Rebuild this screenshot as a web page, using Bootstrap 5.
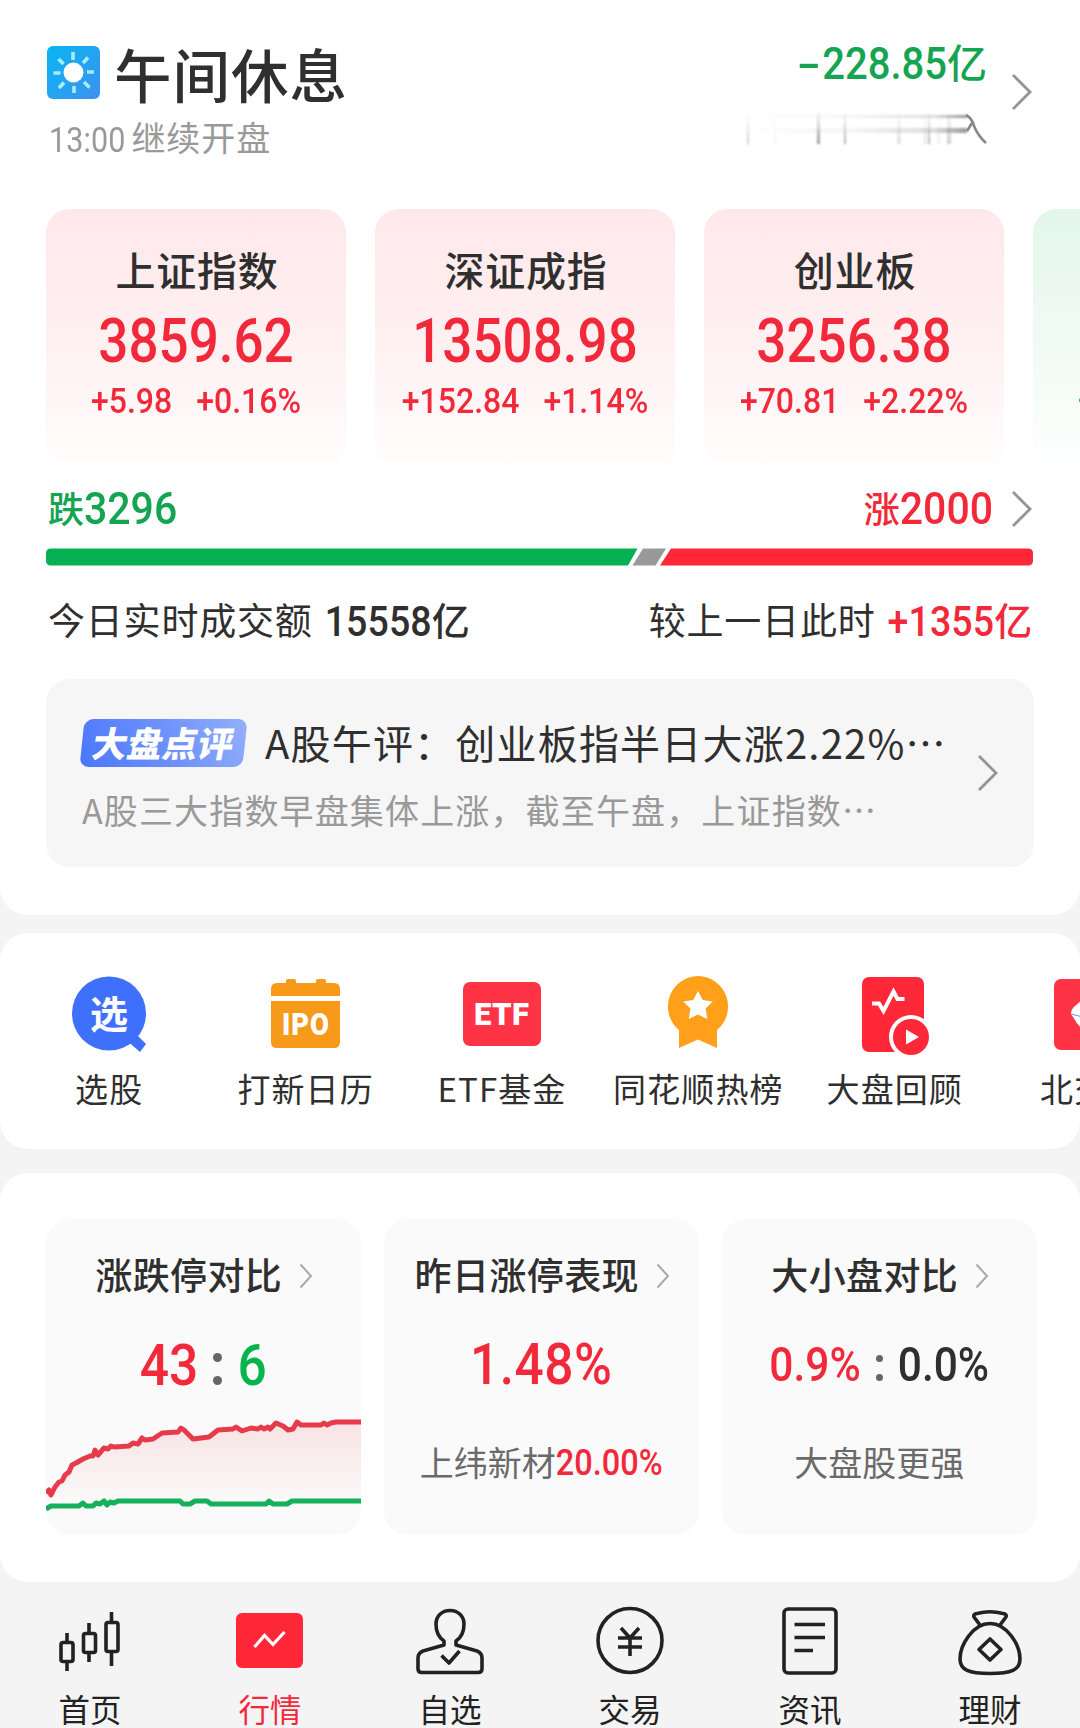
<!DOCTYPE html>
<html lang="zh-CN">
<head>
<meta charset="utf-8">
<meta name="viewport" content="width=device-width, initial-scale=1">
<title>行情</title>
<link rel="stylesheet" href="https://cdn.jsdelivr.net/npm/bootstrap@5.3.0/dist/css/bootstrap.min.css">
<style>
  body{background:#f4f4f4;color:#2f2f2f;font-family:"Noto Sans CJK SC","Noto Sans",sans-serif;width:1080px;height:1728px;overflow:hidden;line-height:1}
  svg{display:block;flex:none}
  .panel{background:#fff;border-radius:28px;overflow:hidden}
  .panel-market{height:915px;border-top-left-radius:0;border-top-right-radius:0;padding:0 46px}
  .panel-tools{height:216px;margin-top:18px}
  .panel-stats{height:409px;margin-top:24px;padding:46px 0 0 46px}
  .up{color:#f2293b}
  .down{color:#14a452}
  .muted{color:#999}
  .med{font-weight:500}
  .din{font-family:Roboto,"Noto Sans",sans-serif;font-weight:500;display:inline-block;transform:scaleY(1.12);white-space:nowrap}
  .head{height:209px}
  .head-title{font-size:57.5px;line-height:60px;letter-spacing:1px;margin:1px 0 0 14px}
  .head-sub{font-size:34px;line-height:40px;letter-spacing:.9px;margin-top:13px;padding-left:3px}
  .head-sub .din{font-size:30.5px;font-weight:400;letter-spacing:.1px;margin-right:6px}
  .flow-sum{font-size:40px;line-height:44px}
  .flow-sum .din{font-size:40px;transform:translateY(-1px) scaleY(1.12)}
  .dash{display:inline-block;transform:scaleX(1.75);margin-right:7px}
  .idx-row{height:259px;gap:29px;width:1400px}
  .idx{width:300px;height:259px;border-radius:24px;flex:none;background:linear-gradient(#fee8ea,#fff0f1 50%,#fffdfd);padding-top:40px}
  .idx-green{background:linear-gradient(#e3f6eb,#f0faf4 50%,#fefffe)}
  .idx-name{font-size:40px;line-height:40px;letter-spacing:.8px;padding-left:2px}
  .idx-val{font-size:53px;line-height:50px;margin-top:22px}
  .idx-val .din{transform:scaleY(1.15)}
  .idx-chg{font-size:32px;line-height:34px;margin-top:18px;gap:24px}
  .breadth{height:80px;font-size:36px;padding:2px 0 0 2px}
  .breadth .din{font-size:41px;transform:scaleY(1.1)}
  .turnover{font-size:37px;line-height:40px;letter-spacing:.8px;margin-top:33px;padding:0 1px 0 2px}
  .turnover .med{margin-left:3px;font-size:38px}
  .turnover .din{font-size:37.5px;letter-spacing:.1px;transform:translateY(-1px) scaleY(1.12)}
  .review{background:#f6f6f6;border-radius:24px;height:188px;margin-top:37px;padding:40px 36px 0 36px}
  .tag{width:163px;height:48px;flex:none;transform:skewX(-6deg);border-radius:9px;background:linear-gradient(60deg,#4b76fb,#6f93fb 55%,#93b0fb);color:#fff;font-weight:900;font-size:35px;line-height:46px}
  .tag span{display:inline-block;transform:skewX(-5deg);letter-spacing:.3px}
  .rv-title{font-size:40px;line-height:46px;letter-spacing:1.2px;margin-left:20px;white-space:nowrap}
  .rv-desc{font-size:34px;line-height:40px;letter-spacing:1.15px;margin-top:23px;white-space:nowrap}
  .tool-row{width:1180px;padding-left:11px}
  .tool{width:196.4px;flex:none;font-size:33px;letter-spacing:1.1px;padding-top:36px}
  .tool-label{margin-top:9px;line-height:40px}
  .stat-row{gap:23.5px;height:316px}
  .stat{width:314.5px;height:316px;flex:none;background:#fafafa;border-radius:24px;overflow:hidden;padding-top:35px}
  .stat-title{font-size:37px;line-height:40px;gap:17px;letter-spacing:.4px;padding-left:2px}
  .stat-title svg{position:relative;top:2px}
  .stat-val{height:60px;margin-top:42px}
  .big-num{font-size:51.5px}
  .mid-num{font-size:42.5px}
  .mid-num,.one-num{position:relative;top:-1px}
  .stat-chart{margin-top:3px}
  .stat-note{font-size:34px;line-height:40px;margin-top:46px;color:#6a6a6a}
  .stat-note .din{font-size:32.5px;transform:translateY(-2px) scaleY(1.12)}
  .colon{display:flex;flex-direction:column}
  .colon i{background:#666;border-radius:50%}
  .tabs{height:146px;padding-top:24px}
  .tab{width:180px;font-size:31.5px;line-height:36px;color:#222}
  .tab svg{margin-bottom:14px}
  .tab.active{color:#f2293b}
</style>
</head>
<body>
<main>
  <section class="panel panel-market">
    <header class="head d-flex justify-content-between">
      <div style="padding-top:42px">
        <div class="d-flex">
          <svg width="54" height="62" viewBox="0 0 54 62">
            <defs><linearGradient id="sky" x1="0" y1="0" x2="1" y2="1"><stop offset="0" stop-color="#07b6f3"/><stop offset="1" stop-color="#3e91f0"/></linearGradient></defs>
            <rect x="1" y="4" width="53" height="53" rx="6" fill="url(#sky)"/>
            <circle cx="27.500" cy="30.500" r="10" fill="#fff"/>
            <g stroke="#a5edff" stroke-width="3.600"><path d="M27 10v8M28 44v7M7.500 31h7M41 30h7M12.500 17l5 5M38 40l5.500 5.500M42 15.500l-5 5.500M18 40.500l-5 5.500"/></g>
          </svg>
          <div class="head-title med">午间休息</div>
        </div>
        <div class="head-sub muted"><span class="din">13:00</span>继续开盘</div>
      </div>
      <div class="d-flex">
        <div class="text-end" style="padding-top:39px">
          <div class="flow-sum down med"><span class="din"><span class="dash">-</span>228.85</span>亿</div>
          <svg class="ms-auto" style="margin-top:21px" width="244" height="38" viewBox="0 0 244 38">
            <defs>
              <linearGradient id="fadeX"><stop offset="0" stop-color="#777" stop-opacity="0"/><stop offset=".5" stop-color="#777" stop-opacity=".08"/><stop offset=".85" stop-color="#777" stop-opacity=".25"/><stop offset="1" stop-color="#666" stop-opacity=".7"/></linearGradient>
              <linearGradient id="fadeY" x1="0" y1="0" x2="0" y2="1"><stop offset="0" stop-color="#888" stop-opacity="0"/><stop offset="1" stop-color="#777" stop-opacity=".75"/></linearGradient>
              <filter id="soft" x="-5%" y="-20%" width="110%" height="140%"><feGaussianBlur stdDeviation=".8"/></filter>
            </defs>
            <g filter="url(#soft)">
              <rect x="4" y="7" width="220" height="3" fill="url(#fadeX)"/>
              <rect x="4" y="20" width="220" height="5" fill="url(#fadeX)"/>
              <g fill="url(#fadeY)"><rect x="4" y="5" width="2" height="31" opacity=".5"/><rect x="31" y="5" width="2" height="31" opacity=".12"/><rect x="74" y="3" width="3" height="33"/><rect x="101" y="3" width="2" height="33" opacity=".8"/><rect x="154" y="3" width="4" height="33" opacity=".3"/><rect x="181" y="3" width="2" height="33" opacity=".3"/><rect x="185" y="3" width="2" height="33" opacity=".8"/><rect x="195" y="5" width="2" height="31" opacity=".2"/><rect x="204" y="3" width="4" height="33" opacity=".5"/></g>
            </g>
            <path d="M223 7q6 3 8 11q4 10 12 17M224 23l5-8" fill="none" stroke="#888" stroke-width="2.600"/>
          </svg>
        </div>
        <svg style="margin:73px 0 0 23px" width="24" height="38" viewBox="0 0 24 38"><path d="M3 2l17 17L3 36" fill="none" stroke="#949494" stroke-width="2.800"/></svg>
      </div>
    </header>

    <div class="idx-row d-flex">
      <div class="idx text-center">
        <div class="idx-name med">上证指数</div>
        <div class="idx-val up"><span class="din">3859.62</span></div>
        <div class="idx-chg up d-flex justify-content-center"><span class="din">+5.98</span><span class="din">+0.16%</span></div>
      </div>
      <div class="idx text-center">
        <div class="idx-name med">深证成指</div>
        <div class="idx-val up"><span class="din">13508.98</span></div>
        <div class="idx-chg up d-flex justify-content-center"><span class="din">+152.84</span><span class="din">+1.14%</span></div>
      </div>
      <div class="idx text-center">
        <div class="idx-name med">创业板</div>
        <div class="idx-val up"><span class="din">3256.38</span></div>
        <div class="idx-chg up d-flex justify-content-center"><span class="din">+70.81</span><span class="din">+2.22%</span></div>
      </div>
      <div class="idx idx-green">
        <div class="down" style="padding:131px 0 0 45px;font-size:32px"><span class="din">-</span></div>
      </div>
    </div>

    <div class="breadth d-flex justify-content-between align-items-center">
      <div class="down med">跌<span class="din">3296</span></div>
      <div class="d-flex align-items-center">
        <div class="up med">涨<span class="din">2000</span></div>
        <svg style="margin-left:17px" width="24" height="38" viewBox="0 0 24 38"><path d="M3 2l17 17L3 36" fill="none" stroke="#949494" stroke-width="2.800"/></svg>
      </div>
    </div>
    <svg width="988" height="18" viewBox="0 0 988 18">
      <path d="M5 .5H591.500L582 17.500H5Q0 17.500 0 12.500V5.500Q0 .5 5 .5Z" fill="#07b053"/>
      <path d="M597 .5H620L609.500 17.500H586.500Z" fill="#999"/>
      <path d="M625 .5H982Q987 .5 987 5.500V12.500Q987 17.500 982 17.500H614Z" fill="#ff2836"/>
    </svg>
    <div class="turnover d-flex justify-content-between">
      <div>今日实时成交额 <span class="med"><span class="din">15558</span>亿</span></div>
      <div>较上一日此时 <span class="up med"><span class="din">+1355</span>亿</span></div>
    </div>
    <div class="review d-flex justify-content-between">
      <div>
        <div class="d-flex"><div class="tag text-center"><span>大盘点评</span></div><div class="rv-title">A股午评：创业板指半日大涨2.22%…</div></div>
        <div class="rv-desc muted">A股三大指数早盘集体上涨，截至午盘，上证指数…</div>
      </div>
      <svg style="margin:35px -2px 0 -40px" width="24" height="38" viewBox="0 0 24 38"><path d="M3 2l17 17L3 36" fill="none" stroke="#949494" stroke-width="2.800"/></svg>
    </div>
  </section>

  <section class="panel panel-tools">
    <div class="tool-row d-flex text-center">
      <div class="tool">
        <svg class="mx-auto" width="84" height="90" viewBox="0 0 84 90">
          <path d="M66 62l13 13-6 8-15-13z" fill="#3f70fb"/><circle cx="42" cy="44.500" r="37" fill="#3f70fb"/>
          <text x="42" y="59" text-anchor="middle" font-size="38" font-weight="700" fill="#fff" letter-spacing="0">选</text>
        </svg>
        <div class="tool-label">选股</div>
      </div>
      <div class="tool">
        <svg class="mx-auto" width="84" height="90" viewBox="0 0 84 90">
          <path d="M7 27V20q0-6 6-6h9v-2q0-2 2-2h6q2 0 2 2v2h20v-2q0-2 2-2h6q2 0 2 2v2h8q6 0 6 6v7zM7 32H76V73q0 6-6 6H13q-6 0-6-6z" fill="#f79a1a"/>
          <text x="42" y="66" text-anchor="middle" font-family="Roboto" font-size="31" font-weight="900" fill="#fff" textLength="48" lengthAdjust="spacingAndGlyphs">IPO</text>
        </svg>
        <div class="tool-label">打新日历</div>
      </div>
      <div class="tool">
        <svg class="mx-auto" width="84" height="90" viewBox="0 0 84 90">
          <rect x="3" y="13" width="78" height="64" rx="7" fill="#fe3446"/>
          <text x="42" y="55.500" text-anchor="middle" font-family="Roboto" font-size="31" font-weight="900" fill="#fff" textLength="56" lengthAdjust="spacing">ETF</text>
        </svg>
        <div class="tool-label">ETF基金</div>
      </div>
      <div class="tool">
        <svg class="mx-auto" width="84" height="90" viewBox="0 0 84 90">
          <path d="M42 7a30.500 30.500 0 0 1 19 54V79L42 70.500L23 79V61A30.500 30.500 0 0 1 42 7Z" fill="#ff9f1a"/>
          <path d="M42 22l4.800 9 10 1.500-7.200 7 1.700 10.500L42 45.500 32.700 50l1.700-10.500-7.200-7 10-1.500z" fill="#fff"/>
        </svg>
        <div class="tool-label">同花顺热榜</div>
      </div>
      <div class="tool">
        <svg class="mx-auto" width="84" height="90" viewBox="0 0 84 90">
          <rect x="9" y="8" width="62" height="75" rx="7" fill="#ff2839"/>
          <path d="M19 34.500H26L30.500 42 40.500 22.500 44.500 30H51.500" fill="none" stroke="#fff" stroke-width="4"/>
          <circle cx="58" cy="68" r="22" fill="#fff"/><circle cx="58" cy="68" r="18" fill="#ff2839"/>
          <path d="M53 60.500V75.500L66 68Z" fill="#fff"/>
        </svg>
        <div class="tool-label">大盘回顾</div>
      </div>
      <div class="tool">
        <svg class="mx-auto" width="84" height="90" viewBox="0 0 84 90">
          <rect x="5" y="10" width="74" height="71" rx="7" fill="#fe3446"/>
          <path d="M22 45q0-5 4-8l8-7H60V60H34q-6-4-8-9z" fill="#fff"/><path d="M22 45l12 3" stroke="#7a8fd0"/>
        </svg>
        <div class="tool-label">北交所</div>
      </div>
    </div>
  </section>

  <section class="panel panel-stats">
    <div class="stat-row d-flex">
      <div class="stat">
        <div class="stat-title med d-flex justify-content-center align-items-center">涨跌停对比<svg width="14" height="26" viewBox="0 0 14 26"><path d="M1.500 1.500L12 13 1.500 24.500" fill="none" stroke="#a9a9a9" stroke-width="2"/></svg></div>
        <div class="stat-val d-flex justify-content-center align-items-center">
          <span class="din big-num up">43</span>
          <span class="colon" style="gap:14px;margin:5px 15px 0 15px"><i style="width:9px;height:9px"></i><i style="width:9px;height:9px"></i></span>
          <span class="din big-num down" style="color:#06b44e">6</span>
        </div>
        <svg class="stat-chart" width="315" height="136" viewBox="0 0 315 136">
          <defs><linearGradient id="area" x1="0" y1="0" x2="0" y2="1"><stop offset="0" stop-color="#f9e2e3"/><stop offset="1" stop-color="#fafafa"/></linearGradient></defs>
          <path d="M0 94L3 91 6 96 9 88 13 83 16 82 19 76 23 73 26 66 30 64 37 60 44 57 48 54 49 49 52 54 58 49 62 50 65 46 68 48 83 47 91 44 96 37 99 41 107 40 116 34 132 33 135 28 141 34 147 40 163 38 172 31 187 30 190 27 196 32 205 29 212 30 218 29 222 30 230 23 237 27 242 31 247 30 251 22 255 26 275 26 278 24 285 24 290 23 315 23V106H0Z" fill="url(#area)"/>
          <path d="M0 94L3 91 5 96 9 88 13 83 16 82 19 76 23 73 26 66 30 64 37 60 44 57 47 57 49 51 52 56 58 49 62 50 65 47 68 48 83 47 87 44 92 45 96 39 99 41 107 40 116 34 132 33 135 29 138 31 147 40 163 38 172 31 187 30 190 28 196 32 205 29 212 30 215 28 218 30 222 28 224 30 230 24 237 27 242 31 247 30 251 23 255 26 275 26 278 24 281 26 285 24 290 23 315 23" fill="none" stroke="#e63b4b" stroke-width="5" stroke-linejoin="round"/>
          <path d="M0 110L5 107H33L37 104 40 107 47 107 50 104 54 105 58 102 61 106 64 103 68 104 72 102H134L137 105H144L149 102H161L165 105H220L223 102 227 105H241L246 102H315" fill="none" stroke="#14b05a" stroke-width="5" stroke-linejoin="round"/>
        </svg>
      </div>
      <div class="stat">
        <div class="stat-title med d-flex justify-content-center align-items-center">昨日涨停表现<svg width="14" height="26" viewBox="0 0 14 26"><path d="M1.500 1.500L12 13 1.500 24.500" fill="none" stroke="#a9a9a9" stroke-width="2"/></svg></div>
        <div class="stat-val d-flex justify-content-center align-items-center"><span class="din big-num one-num up" style="letter-spacing:.5px">1.48%</span></div>
        <div class="stat-note text-center">上纬新材<span class="din up">20.00%</span></div>
      </div>
      <div class="stat">
        <div class="stat-title med d-flex justify-content-center align-items-center">大小盘对比<svg width="14" height="26" viewBox="0 0 14 26"><path d="M1.500 1.500L12 13 1.500 24.500" fill="none" stroke="#a9a9a9" stroke-width="2"/></svg></div>
        <div class="stat-val d-flex justify-content-center align-items-center">
          <span class="din mid-num up">0.9%</span>
          <span class="colon" style="gap:12px;margin:4px 15px 0 15px"><i style="width:7px;height:7px"></i><i style="width:7px;height:7px"></i></span>
          <span class="din mid-num">0.0%</span>
        </div>
        <div class="stat-note text-center">大盘股更强</div>
      </div>
    </div>
  </section>
</main>

<nav class="tabs d-flex text-center">
  <div class="tab">
    <svg class="mx-auto" width="70" height="70" viewBox="0 0 70 70" fill="none" stroke="#222" stroke-width="3.600"><rect x="6" y="36.500" width="12" height="19" rx="2"/><path d="M12 27v9M12 56v9M34 17v10M34 47v9M56.500 6v10M56.500 46v14"/><rect x="28.500" y="27.500" width="12" height="19" rx="2"/><rect x="51" y="16.500" width="12" height="29" rx="2"/></svg>
    首页
  </div>
  <div class="tab active">
    <svg class="mx-auto" width="70" height="70" viewBox="0 0 70 70"><rect x="1" y="7" width="67" height="55" rx="6" fill="#ff2839"/><path d="M19.500 41L29.500 29.500 38 38.500 49.500 26" fill="none" stroke="#fff" stroke-width="3.200"/></svg>
    行情
  </div>
  <div class="tab">
    <svg class="mx-auto" width="70" height="70" viewBox="0 0 70 70" fill="none" stroke="#222" stroke-width="3.600" stroke-linejoin="round"><path d="M35 4.500C27 4.500 21 10 21 18C21 26 23 31 29 35V39L8 45Q3 47 3 52V63Q3 66.500 7 66.500H63Q67 66.500 67 63V52Q67 47 62 45L41 39V35C47 31 49 26 49 18C49 10 43 4.500 35 4.500Z"/><path d="M26.500 49.500L34 57 44.500 45"/></svg>
    自选
  </div>
  <div class="tab">
    <svg class="mx-auto" width="70" height="70" viewBox="0 0 70 70" fill="none" stroke="#222" stroke-width="3.600"><circle cx="35" cy="34.500" r="32"/><path d="M26 22L35 32 44 22M23 32H47M23 41H47M35 31V50"/></svg>
    交易
  </div>
  <div class="tab">
    <svg class="mx-auto" width="70" height="70" viewBox="0 0 70 70" fill="none" stroke="#222" stroke-width="3.600"><rect x="9" y="3" width="52" height="64" rx="4"/><path d="M19.500 18.500H50M19.500 31.500H50M19.500 44.500H38"/></svg>
    资讯
  </div>
  <div class="tab">
    <svg class="mx-auto" width="70" height="70" viewBox="0 0 70 70" fill="none" stroke="#222" stroke-width="3.600" stroke-linejoin="round"><path d="M25 19L19 11Q18 8 22 7.500Q35 4 48 7.500Q52 8 51 11L45 19M35 17.500C18 17.500 5 39 5 53C5 64 14 67.500 35 67.500C56 67.500 65 64 65 53C65 39 52 17.500 35 17.500Z"/><path d="M35 33L46 43.500 35 54 24 43.500Z"/></svg>
    理财
  </div>
</nav>
<script src="https://cdn.jsdelivr.net/npm/bootstrap@5.3.0/dist/js/bootstrap.bundle.min.js"></script>
</body>
</html>
